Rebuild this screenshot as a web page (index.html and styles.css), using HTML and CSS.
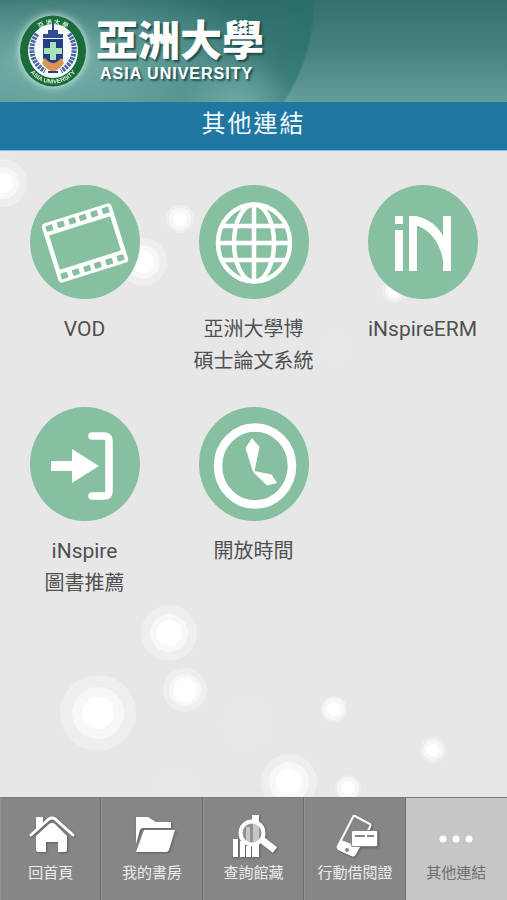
FILE: index.html
```html
<!DOCTYPE html>
<html lang="zh-Hant">
<head>
<meta charset="utf-8">
<meta name="viewport" content="width=device-width, initial-scale=1">
<title>其他連結</title>
<link rel="stylesheet" href="styles.css">
</head>
<body>
<header class="brand">
  <svg class="emblem" viewBox="0 0 74 78" aria-hidden="true">
    <defs>
      <path id="ring-bottom" d="M7 39 A30 32.500 0 0 0 67 39"/>
      <path id="ring-top" d="M12 39 A25 27 0 0 1 62 39"/>
    </defs>
    <ellipse cx="37" cy="39" rx="33" ry="35.500" fill="#1b6b3b"/>
    <ellipse cx="37" cy="39" rx="25" ry="27" fill="#f4faf8"/>
    <g class="emblem-text">
      <text><textPath href="#ring-bottom" startOffset="50%">ASIA UNIVERSITY</textPath></text>
      <text><textPath href="#ring-top" startOffset="50%">亞 洲 大 學</textPath></text>
    </g>
    <g fill="none" stroke="#4a64a4" stroke-width="5" stroke-dasharray="2.500 1">
      <path d="M21 22 C12 34 15 51 29 59"/>
      <path d="M53 22 C62 34 59 51 45 59"/>
    </g>
    <path d="M27 26 V22 H32 V18 H36 V12 H38 V18 H42 V22 H47 V26 Z" fill="#304b93"/>
    <path d="M27 27 H47 V46 Q45 55 37 58 Q29 55 27 46 Z" fill="#253e86"/>
    <path d="M34 30 H40 V36 H46 V42 H40 V48 H34 V42 H28 V36 H34 Z" fill="#a9e3b5"/>
    <path d="M29 46 Q37 56 45 46 L48 51 Q44 57 39 59 H35 Q30 57 26 51 Z" fill="#dc9550"/>
    <path d="M32 60 H42" stroke="#253e86" stroke-width="2"/>
  </svg>
  <div class="wordmark">
    <span class="wordmark-zh">亞洲大學</span>
    <span class="wordmark-en">ASIA UNIVERSITY</span>
  </div>
</header>

<h1 class="title">其他連結</h1>

<main class="content">
  <svg class="bubbles" viewBox="0 0 507 646" preserveAspectRatio="xMidYMin slice" aria-hidden="true">
    <g fill="#fff" fill-opacity=".3">
      <circle cx="3" cy="32" r="24"/><circle cx="143" cy="111" r="24"/><circle cx="169" cy="482" r="28"/>
      <circle cx="98" cy="562" r="38"/><circle cx="185" cy="539" r="22"/><circle cx="289" cy="631" r="28"/>
      <circle cx="180" cy="68" r="14"/><circle cx="394" cy="140" r="12"/><circle cx="334" cy="558" r="13"/>
      <circle cx="433" cy="599" r="13"/><circle cx="348" cy="637" r="13"/>
    </g>
    <g fill="#fff" fill-opacity=".55">
      <circle cx="3" cy="32" r="16"/><circle cx="143" cy="111" r="17"/><circle cx="169" cy="482" r="19"/>
      <circle cx="98" cy="562" r="26"/><circle cx="185" cy="539" r="16"/><circle cx="289" cy="631" r="20"/>
      <circle cx="180" cy="68" r="11"/><circle cx="394" cy="140" r="9"/><circle cx="334" cy="558" r="11"/>
      <circle cx="433" cy="599" r="10"/><circle cx="348" cy="637" r="11"/>
    </g>
    <g fill="#fff">
      <circle cx="3" cy="32" r="10"/><circle cx="143" cy="111" r="11"/><circle cx="169" cy="482" r="13"/>
      <circle cx="98" cy="562" r="16"/><circle cx="185" cy="539" r="12"/><circle cx="289" cy="631" r="13"/>
      <circle cx="180" cy="68" r="7"/><circle cx="394" cy="140" r="6"/><circle cx="334" cy="558" r="7"/>
      <circle cx="433" cy="599" r="6"/><circle cx="348" cy="637" r="7"/>
    </g>
    <g fill="#fff" fill-opacity=".06">
      <circle cx="247" cy="572" r="24"/><circle cx="247" cy="572" r="13"/><circle cx="260" cy="156" r="12"/>
      <circle cx="335" cy="196" r="14"/><circle cx="176" cy="644" r="24"/>
    </g>
  </svg>

  <nav class="links" aria-label="其他連結">
    <a class="link" href="#vod">
      <svg class="link-icon" viewBox="0 0 110 114" aria-hidden="true">
        <ellipse class="disc" cx="55" cy="57" rx="55" ry="57"/>
        <g transform="rotate(-17.500 55 58)">
          <rect x="18.500" y="27" width="73" height="62" rx="4" fill="#fff"/>
          <path class="disc" d="M23 40 H87 V76 H23 Z"/>
          <g class="disc">
            <rect x="22" y="30" width="7" height="6" rx="1"/><rect x="34" y="30" width="7" height="6" rx="1"/><rect x="46" y="30" width="7" height="6" rx="1"/><rect x="57" y="30" width="7" height="6" rx="1"/><rect x="69" y="30" width="7" height="6" rx="1"/><rect x="81" y="30" width="7" height="6" rx="1"/>
            <rect x="22" y="80" width="7" height="6" rx="1"/><rect x="34" y="80" width="7" height="6" rx="1"/><rect x="46" y="80" width="7" height="6" rx="1"/><rect x="57" y="80" width="7" height="6" rx="1"/><rect x="69" y="80" width="7" height="6" rx="1"/><rect x="81" y="80" width="7" height="6" rx="1"/>
          </g>
        </g>
      </svg>
      <span class="latin">VOD</span>
    </a>
    <a class="link" href="#thesis">
      <svg class="link-icon" viewBox="0 0 110 114" aria-hidden="true">
        <ellipse class="disc" cx="55" cy="57" rx="55" ry="57"/>
        <g fill="none" stroke="#fff" stroke-width="4.500">
          <ellipse cx="55" cy="58" rx="36" ry="38.500"/>
          <ellipse cx="55" cy="58" rx="20" ry="38.500"/>
          <path d="M55 19 V97 M19 58 H91 M24 41 H86 M24 75 H86"/>
        </g>
      </svg>
      <span>亞洲大學博<br>碩士論文系統</span>
    </a>
    <a class="link" href="#erm">
      <svg class="link-icon" viewBox="0 0 110 114" aria-hidden="true">
        <ellipse class="disc" cx="55" cy="57" rx="55" ry="57"/>
        <g fill="#fff">
          <rect x="27" y="31" width="8" height="8"/><rect x="27" y="45" width="8" height="41"/>
          <rect x="41" y="31" width="8" height="55"/><rect x="75" y="31" width="8" height="55"/>
          <path d="M41 31 H46 C59 32 70 41 75 51 L79 74 L75 76 C73 59 62 44 47 40 Z"/>
        </g>
      </svg>
      <span class="latin">iNspireERM</span>
    </a>
    <a class="link" href="#recommend">
      <svg class="link-icon" viewBox="0 0 110 114" aria-hidden="true">
        <ellipse class="disc" cx="55" cy="57" rx="55" ry="57"/>
        <path d="M21 54 H42 V42 L69 59 L42 76 V64 H21 Z" fill="#fff"/>
        <path d="M62 29 H74 Q79 29 79 34 V84 Q79 89 74 89 H62" fill="none" stroke="#fff" stroke-width="7.500" stroke-linecap="round"/>
      </svg>
      <span><span class="latin">iNspire</span><br>圖書推薦</span>
    </a>
    <a class="link" href="#hours">
      <svg class="link-icon" viewBox="0 0 110 114" aria-hidden="true">
        <ellipse class="disc" cx="55" cy="57" rx="55" ry="57"/>
        <ellipse cx="56" cy="59" rx="37" ry="38.500" fill="none" stroke="#fff" stroke-width="8.500"/>
        <path d="M53 31 L60.500 40 L55.500 64 L72.500 67.500 L78 76 L68 78.500 L54 65 L46.500 41 Z" fill="#fff"/>
      </svg>
      <span>開放時間</span>
    </a>
  </nav>
</main>

<nav class="tabs" aria-label="主選單">
  <a class="tab" href="#home">
    <svg class="tab-icon" viewBox="0 0 50 46" aria-hidden="true">
      <path d="M10 17 V3 H17 V10 Z" fill="#fff"/>
      <path d="M5 21 L23 5 Q26 3 29 5 L47 21" fill="none" stroke="#fff" stroke-width="3" stroke-linecap="round"/>
      <path d="M10 22 L23 10 Q26 8 29 10 L41 22 V36 Q41 38 39 38 H32 V28 H20 V38 H12 Q10 38 10 36 Z" fill="#fff"/>
    </svg>
    <span>回首頁</span>
  </a>
  <a class="tab" href="#shelf">
    <svg class="tab-icon" viewBox="0 0 50 46" aria-hidden="true">
      <path d="M9 3 H21 L29 8 H44 V14 H16 Q14 14 13 16 L9 30 Z" fill="#fff"/>
      <path d="M17 16 H48 L42 36 Q41 38 39 38 H9 Z" fill="#fff"/>
    </svg>
    <span>我的書房</span>
  </a>
  <a class="tab" href="#search">
    <svg class="tab-icon" viewBox="0 0 50 46" aria-hidden="true">
      <path d="M5 25 H10 V43 H5 Z M12 27 H17 V43 H12 Z M18 32 H23 V43 H18 Z M24 1 H31 V43 H24 Z" fill="#fff"/>
      <circle cx="24" cy="19" r="11" fill="#929292"/>
      <path d="M18 13 H22 V29 H18 Z M25 10 H31 V28 H25 Z" fill="#c6c6c6"/>
      <circle cx="24" cy="19" r="11.500" fill="none" stroke="#fff" stroke-width="4"/>
      <path d="M34 26 L47 36" stroke="#fff" stroke-width="7"/>
    </svg>
    <span>查詢館藏</span>
  </a>
  <a class="tab" href="#loan">
    <svg class="tab-icon" viewBox="0 0 50 46" aria-hidden="true">
      <path d="M25 2 L40 10 Q41 11 40 13 L25 40 Q24 42 22 41 L9 35 Q7 34 8 32 L23 3 Q24 1 25 2 Z" fill="#868686" stroke="#fff" stroke-width="2"/>
      <path d="M11 26 L29 33 L25 41 Q24 43 22 42 L8 36 Q7 35 8 33 Z" fill="#fff"/>
      <circle cx="17" cy="36" r="2" fill="#868686"/>
      <rect x="21" y="16" width="27" height="17" rx="2" fill="#868686"/>
      <rect x="22" y="17" width="25" height="15" rx="1" fill="#fff"/>
      <path d="M25 22 H35 M37 22 H44" stroke="#868686" stroke-width="2"/>
    </svg>
    <span>行動借閱證</span>
  </a>
  <a class="tab tab-active" href="#more" aria-current="page">
    <svg class="tab-icon" viewBox="0 0 50 46" aria-hidden="true">
      <g fill="#fff"><circle cx="12" cy="25" r="3.500"/><circle cx="25" cy="25" r="3.500"/><circle cx="38" cy="25" r="3.500"/></g>
    </svg>
    <span>其他連結</span>
  </a>
</nav>
</body>
</html>
```
FILE: styles.css
```css
* {
  box-sizing: border-box;
}

body {
  margin: 0;
  min-height: 100vh;
  display: flex;
  flex-direction: column;
  background: #e7e7e7;
  font-family: Roboto, "Noto Sans CJK TC", sans-serif;
}

a {
  color: inherit;
  text-decoration: none;
}

/* Brand banner */
.brand {
  display: flex;
  align-items: center;
  gap: 6px;
  height: 102px;
  padding: 0 16px;
  background:
    radial-gradient(circle at 240px 115px, rgba(140, 195, 192, .7), rgba(140, 195, 192, 0) 60px),
    radial-gradient(ellipse 230px 80px at 50px 60px, rgba(150, 205, 195, .6), rgba(150, 205, 195, 0)),
    radial-gradient(ellipse 270px 212px at 45px 5px, rgba(30, 110, 105, .1) 30%, rgba(30, 105, 100, .5) 99%, rgba(30, 105, 100, 0) 100%),
    linear-gradient(#34706d, #46827f 50%, #629d9a);
}

.emblem {
  width: 74px;
  height: 78px;
  flex: none;
  filter: drop-shadow(0 0 4px #e4f8f2);
}

.emblem-text {
  fill: #d9f0df;
  font-family: "Liberation Sans", "Noto Sans CJK TC", sans-serif;
  font-size: 6px;
  font-weight: bold;
  text-anchor: middle;
}

.wordmark {
  display: flex;
  flex-direction: column;
  color: #fff;
  text-shadow: 2px 2px 2px rgba(20, 60, 60, .8);
}

.wordmark-zh {
  font-family: "Liberation Sans", "Noto Sans CJK TC", sans-serif;
  font-size: 42px;
  font-weight: 900;
  line-height: 46px;
}

.wordmark-en {
  padding-left: 4px;
  font-family: "Liberation Sans", sans-serif;
  font-size: 16px;
  font-weight: bold;
  letter-spacing: 1px;
  line-height: 18px;
}

.title {
  margin: 0;
  height: 49px;
  border-bottom: 1px solid #8fbcd8;
  background: #2077a2;
  color: #f2f9fc;
  font-size: 24px;
  font-weight: 400;
  letter-spacing: 2px;
  line-height: 44px;
  text-align: center;
}

/* Link grid */
.content {
  position: relative;
  flex: 1;
  padding: 34px 0;
}

.bubbles {
  position: absolute;
  inset: 0;
  width: 100%;
  height: 100%;
}

.links {
  position: relative;
  display: grid;
  grid-template-columns: repeat(3, 1fr);
  row-gap: 30px;
}

.link {
  display: flex;
  flex-direction: column;
  align-items: center;
  gap: 14px;
  color: #505050;
  font-size: 20px;
  line-height: 32px;
  text-align: center;
}

.latin {
  font-size: 21px;
}

.link-icon {
  width: 110px;
  height: 114px;
}

.disc {
  fill: #86c0a0;
}

/* Bottom tab bar */
.tabs {
  display: grid;
  grid-template-columns: repeat(5, 1fr);
  border-top: 1px solid #7a7a7a;
  background: #868686;
}

.tab {
  display: flex;
  flex-direction: column;
  align-items: center;
  gap: 2px;
  padding: 16px 0;
  border-right: 1px solid #6c6c6c;
  border-left: 1px solid #929292;
  color: #ececec;
  font-size: 15px;
  line-height: 22px;
  white-space: nowrap;
}

.tab-icon {
  width: 50px;
  height: 46px;
  filter: drop-shadow(1px 1px 1px rgba(0, 0, 0, .3));
}

.tab-active {
  border-color: #c6c6c6;
  background: #c6c6c6;
  color: #6e6e6e;
}

.tab-active .tab-icon {
  filter: none;
}
```
